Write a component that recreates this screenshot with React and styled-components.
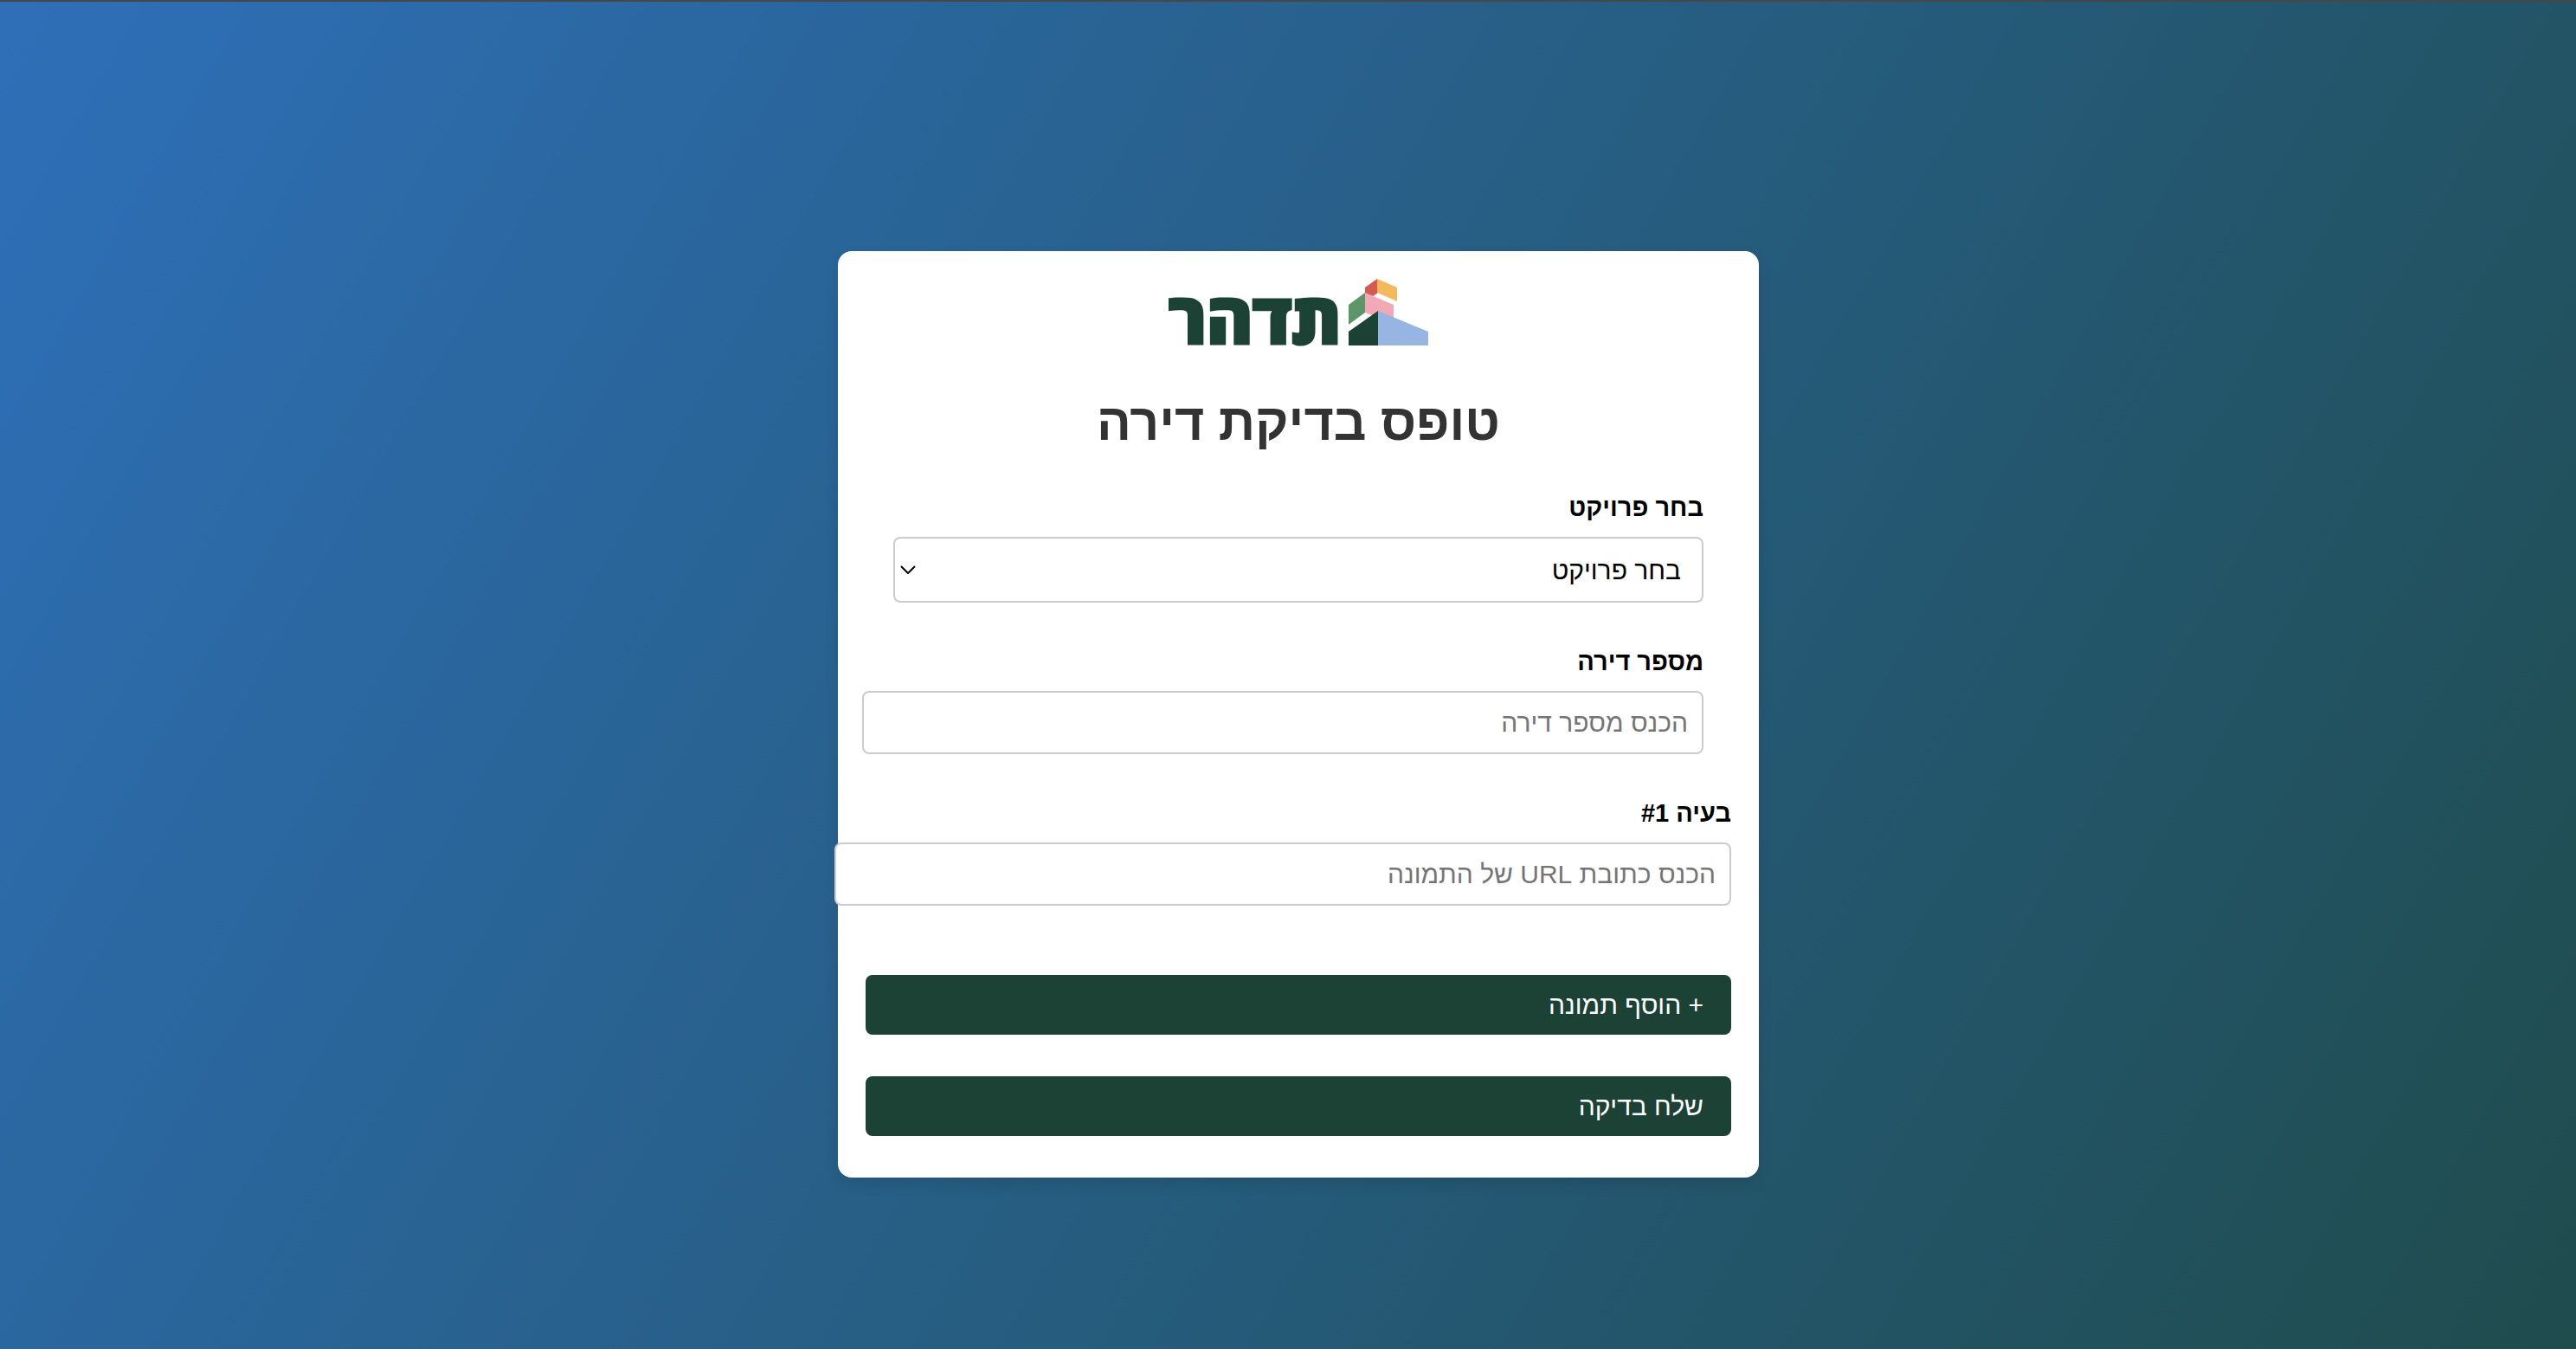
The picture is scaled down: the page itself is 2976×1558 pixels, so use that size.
import React, { useState } from "react";
import styled, { createGlobalStyle } from "styled-components";

const GlobalStyle = createGlobalStyle`
  body {
    margin: 0;
    font-family: "Liberation Sans", Arial, sans-serif;
  }
`;

const Page = styled.main`
  box-sizing: border-box;
  min-height: 100vh;
  display: flex;
  align-items: center;
  justify-content: center;
  padding: 90px 0 0 24px;
  border-top: 2px solid #474747;
  background: linear-gradient(120deg, #2e6fb8, #1f4c4d);
`;

const Card = styled.form`
  box-sizing: border-box;
  width: 1064px;
  max-width: 100%;
  display: flex;
  flex-direction: column;
  padding: 32px 32px 48px;
  border-radius: 16px;
  background: #fff;
  box-shadow: 0 8px 16px rgba(0, 0, 0, 0.1);
`;

const Logo = styled.svg`
  align-self: center;
  width: 300px;
  height: 77px;
  overflow: visible;
`;

const Wordmark = styled.text`
  direction: rtl;
  font-family: "Open Sans", sans-serif;
  font-size: 81px;
  font-weight: 800;
  fill: #1b4235;
  stroke: #1b4235;
  stroke-width: 3px;
`;

const Title = styled.h1`
  margin: 53px 0 44px;
  font-size: 59px;
  line-height: 72px;
  text-align: center;
  color: #333;
`;

const Field = styled.div`
  display: flex;
  flex-direction: column;
  gap: 16px;
  margin-bottom: ${(p) => (p.$last ? 80 : 50)}px;
  padding: 0 ${(p) => (p.$inset ? 32 : 0)}px;
`;

const Label = styled.label`
  font-size: 29px;
  font-weight: 700;
  line-height: 36px;
  color: #000;
`;

const SelectBox = styled.div`
  position: relative;
  display: flex;
`;

const Select = styled.select`
  appearance: none;
  width: 100%;
  height: 76px;
  padding: 0 24px;
  border: 2px solid #ccc;
  border-radius: 8px;
  background: #fff;
  color: #000;
  font-family: inherit;
  font-size: 30px;
`;

const Chevron = styled.svg`
  position: absolute;
  left: 8px;
  top: 50%;
  width: 18px;
  height: 10px;
  margin-top: -5px;
  pointer-events: none;
`;

const Input = styled.input`
  box-sizing: content-box;
  width: 100%;
  height: 37px;
  padding: 16px;
  border: 2px solid #ccc;
  border-radius: 8px;
  background: #fff;
  font-family: inherit;
  font-size: 30px;

  &::placeholder {
    color: #757575;
  }
`;

const Actions = styled.div`
  display: flex;
  flex-direction: column;
  gap: 48px;
`;

const Button = styled.button`
  height: 69px;
  padding: 0 32px;
  border: 0;
  border-radius: 8px;
  background: #1b4235;
  color: #fff;
  font-family: inherit;
  font-size: 30px;
  text-align: right;
  cursor: pointer;
`;

function TidharLogo() {
  return (
    <Logo viewBox="0 0 300 77" role="img" aria-label="תדהר">
      <Wordmark x="199" y="75">תדהר</Wordmark>
      <polygon points="227,10 241,0 241,17 236,20 227,17" fill="#d65a52" />
      <polygon points="241,0 264,10 264,26 241,16" fill="#f4b95b" />
      <polygon points="208,30 227,16 227,39 208,53" fill="#5d9668" />
      <polygon points="227,16 260,30 260,50 242,42 235,42 227,39" fill="#f2a9b6" />
      <polygon points="208,61 242,37 242,77 208,77" fill="#1b4235" />
      <polygon points="242,37 300,61 300,77 242,77" fill="#96b5e3" />
    </Logo>
  );
}

export default function App() {
  const [project, setProject] = useState("");

  return (
    <>
      <GlobalStyle />
      <Page>
        <Card dir="rtl" lang="he" onSubmit={(e) => e.preventDefault()}>
          <TidharLogo />
          <Title>טופס בדיקת דירה</Title>
          <Field $inset>
            <Label htmlFor="project">בחר פרויקט</Label>
            <SelectBox>
              <Select id="project" value={project} onChange={(e) => setProject(e.target.value)}>
                <option value="">בחר פרויקט</option>
              </Select>
              <Chevron viewBox="0 0 18 10" aria-hidden="true">
                <path d="M1 1l8 8 8-8" fill="none" stroke="#000" strokeWidth="2" />
              </Chevron>
            </SelectBox>
          </Field>
          <Field $inset>
            <Label htmlFor="apartment">מספר דירה</Label>
            <Input id="apartment" type="text" placeholder="הכנס מספר דירה" />
          </Field>
          <Field $last>
            <Label htmlFor="image-url">בעיה #1</Label>
            <Input id="image-url" type="text" placeholder="הכנס כתובת URL של התמונה" />
          </Field>
          <Actions>
            <Button type="button">+ הוסף תמונה</Button>
            <Button type="submit">שלח בדיקה</Button>
          </Actions>
        </Card>
      </Page>
    </>
  );
}
